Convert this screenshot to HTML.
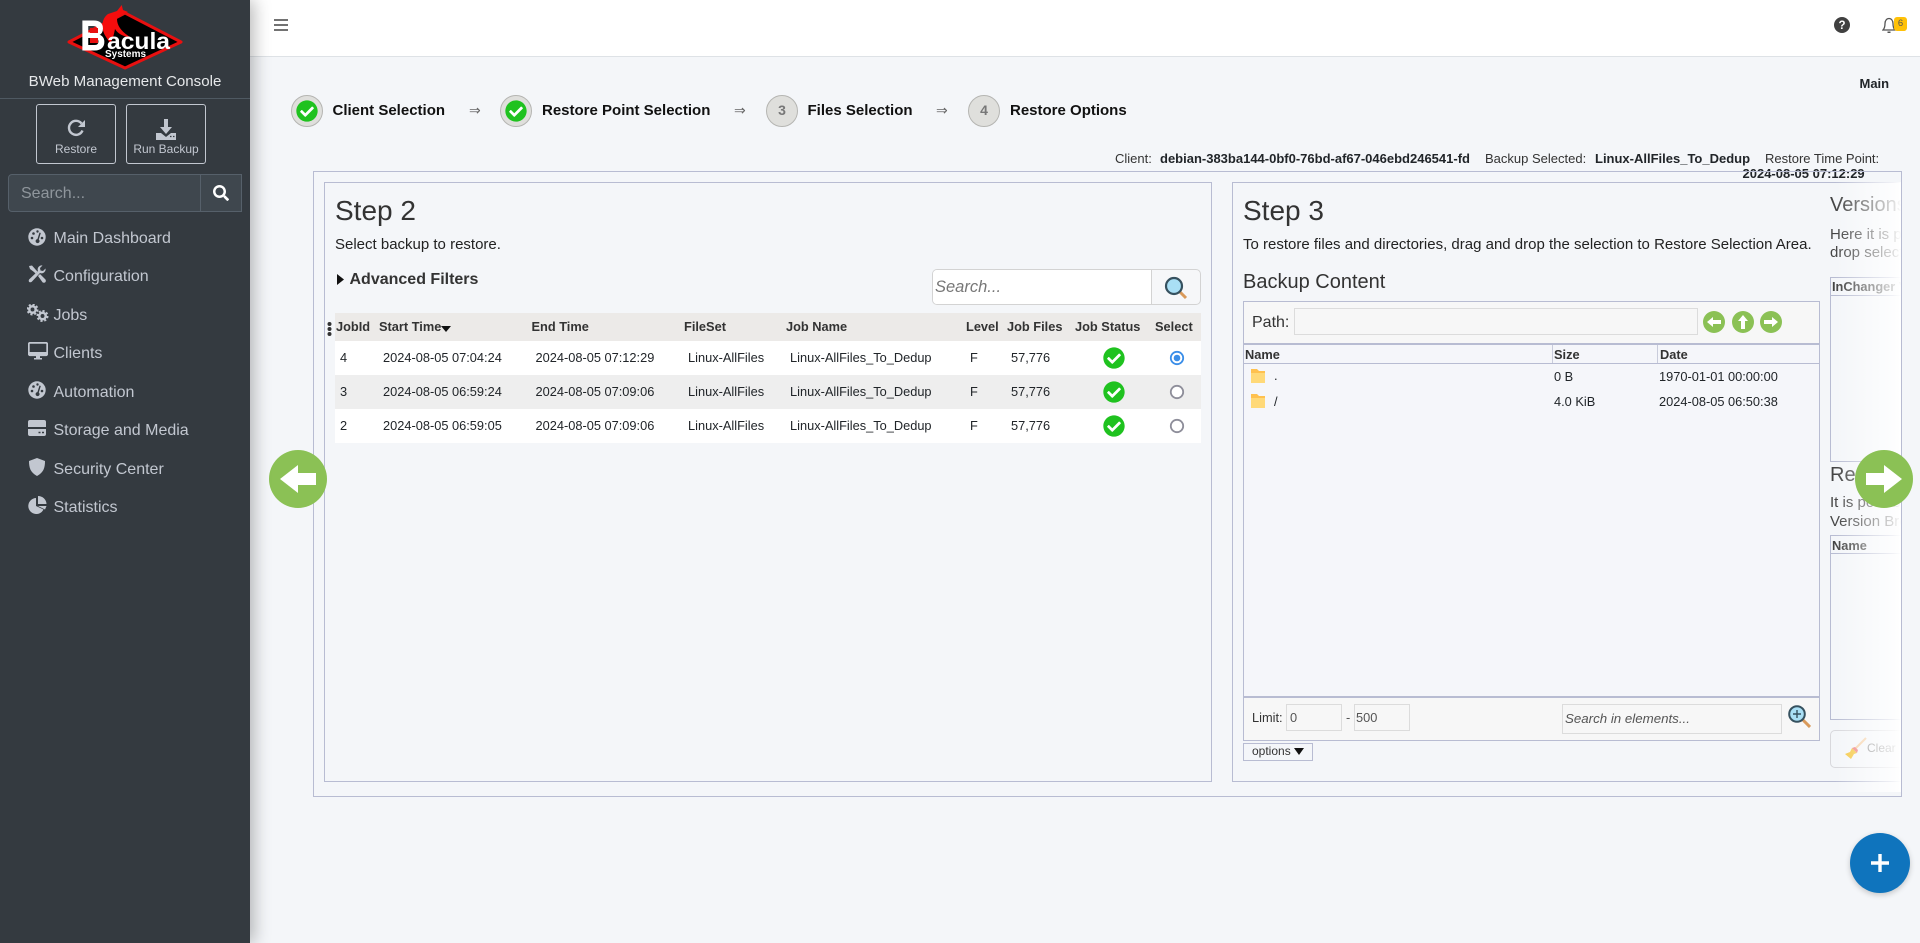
<!DOCTYPE html>
<html><head><meta charset="utf-8"><title>BWeb</title>
<style>
html,body{margin:0;padding:0;width:1920px;height:943px;overflow:hidden;background:#f4f6f9;font-family:"Liberation Sans",sans-serif;color:#212529}
.a,.t{position:absolute;box-sizing:border-box}
.t{white-space:nowrap;line-height:1}
.s{font-size:12.8px}
.i{font-size:13px}
.b{font-weight:bold}
.m{font-size:16px;color:#c2c7d0;left:53.5px}
.st{font-size:15px;font-weight:bold;color:#111}
.circ{width:32px;height:32px;border-radius:50%;background:#dfdfdc;border:1px solid #b5b5b2;top:95px;color:#777;font-weight:bold;font-size:14px;text-align:center;line-height:28px}
.arr{font-size:14px;color:#666;top:103px}
.bx{border:1px solid #b8bcd2}
svg{position:absolute;display:block}
</style></head><body>

<!-- topbar -->
<div class="a" style="left:250px;top:0;width:1670px;height:57px;background:#fff;border-bottom:1px solid #dee2e6"></div>
<svg style="left:274px;top:18px" width="14" height="14" viewBox="0 0 14 14"><path d="M0 2h14M0 7h14M0 12h14" stroke="#444" stroke-width="1.6"/></svg>
<svg style="left:1834px;top:17px" width="16" height="16" viewBox="0 0 16 16"><circle cx="8" cy="8" r="8" fill="#404040"/><text x="8" y="12" font-size="11.5" font-weight="bold" fill="#fff" text-anchor="middle" font-family="Liberation Sans">?</text></svg>
<svg style="left:1882px;top:16px" width="14" height="18" viewBox="0 0 14 18"><path d="M1 14c1.500-1.500 2-3 2-6.500C3 4.500 4.800 2.500 7 2.500s4 2 4 5c0 3.500.5 5 2 6.500z" fill="none" stroke="#555" stroke-width="1.300"/><path d="M5.500 15.500h3v1.500h-3z" fill="#555"/></svg>
<div class="a" style="left:1894px;top:17px;width:13px;height:14px;background:#ffc107;border-radius:3px;font-size:9.500px;line-height:14px;text-align:center;color:#555">6</div>
<div class="t b i" style="left:1859.500px;top:77px">Main</div>

<!-- sidebar -->
<div class="a" style="left:0;top:0;width:250px;height:943px;background:#343a40;box-shadow:4px 0 16px rgba(0,0,0,.28);z-index:5">
  <svg style="left:66px;top:4px" width="118" height="68" viewBox="0 0 118 68">
    <path d="M59 9L115 38 59 64 3 38z" fill="#000" stroke="#e81010" stroke-width="3" stroke-linejoin="round"/>
    <path d="M36.700 24C36 17 38 13 42 10L51 7 55.700 1 57 6 62 8C56 10 52 12 51 15 51 22 56 28 64 33 58 33 52 30 49 25 48 30 47 35 44 39 41 34 37 30 36.700 24z" fill="#f50d0d"/>
    <text x="14.500" y="46" font-family="Liberation Sans" font-weight="bold" font-size="42" fill="#fff" stroke="#fff" stroke-width="1" textLength="25" lengthAdjust="spacingAndGlyphs">B</text>
    <path d="M24 24h8v5h-8zM24 34h8v5h-8z" fill="#e81010"/>
    <text x="41" y="45" font-family="Liberation Sans" font-weight="bold" font-size="23" fill="#fff" textLength="63" lengthAdjust="spacingAndGlyphs">acula</text>
    <text x="39" y="53" font-family="Liberation Sans" font-weight="bold" font-size="10" fill="#fff" textLength="41" lengthAdjust="spacingAndGlyphs">Systems</text>
  </svg>
  <div class="t" style="left:0;width:250px;text-align:center;top:74px;font-size:15.100px;color:#e6e8ea">BWeb Management Console</div>
  <div class="a" style="left:0;top:98px;width:250px;height:1px;background:#4f5962"></div>

  <div class="a" style="left:36px;top:104px;width:80px;height:60px;border:1px solid #c2c7d0;border-radius:3px"></div>
  <svg style="left:67px;top:119px" width="19" height="19" viewBox="0 0 19 19"><path d="M15.500 11.500A7 7 0 1 1 14.500 4.500" fill="none" stroke="#c2c7d0" stroke-width="2.400"/><path d="M18 1v7h-7z" fill="#c2c7d0"/></svg>
  <div class="t" style="left:36px;width:80px;text-align:center;top:143px;font-size:12px;color:#c2c7d0">Restore</div>
  <div class="a" style="left:126px;top:104px;width:80px;height:60px;border:1px solid #c2c7d0;border-radius:3px"></div>
  <svg style="left:156px;top:119px" width="20" height="21" viewBox="0 0 20 21"><path d="M8 0h4v8h4l-6 7-6-7h4z" fill="#c2c7d0"/><path d="M0 14h5l5 4 5-4h5v7H0z" fill="#c2c7d0"/><path d="M14 17.500h1.500M17 17.500h1.500" stroke="#343a40" stroke-width="1.200"/></svg>
  <div class="t" style="left:126px;width:80px;text-align:center;top:143px;font-size:12px;color:#c2c7d0">Run Backup</div>

  <div class="a" style="left:8px;top:174px;width:234px;height:38px;background:#3f474e;border:1px solid #56606a;border-radius:4px 0 0 4px"></div>
  <div class="a" style="left:200px;top:174px;width:1px;height:38px;background:#56606a"></div>
  <div class="t" style="left:21px;top:186px;font-size:16px;color:#8f969c">Search...</div>
  <svg style="left:213px;top:185px" width="16" height="16" viewBox="0 0 512 512"><path fill="#fff" d="M505 442.700L405.300 343c-4.500-4.500-10.600-7-17-7H372c27.600-35.300 44-79.700 44-128C416 93.100 322.900 0 208 0S0 93.100 0 208s93.100 208 208 208c48.300 0 92.700-16.400 128-44v16.300c0 6.400 2.500 12.500 7 17l99.700 99.700c9.400 9.400 24.600 9.400 33.900 0l28.300-28.300c9.400-9.400 9.400-24.600.1-34zM208 336c-70.700 0-128-57.200-128-128 0-70.700 57.200-128 128-128 70.700 0 128 57.200 128 128 0 70.700-57.200 128-128 128z"/></svg>

  <svg style="left:28px;top:228px" width="18" height="18" viewBox="0 0 18 18"><circle cx="9" cy="9" r="8.700" fill="#c2c7d0"/><g fill="#343a40"><circle cx="4" cy="10" r="1.300"/><circle cx="5.500" cy="5.500" r="1.300"/><circle cx="9.500" cy="3.500" r="1.200"/><circle cx="14" cy="10" r="1.300"/><path d="M11.500 4.500l1.300.5-2 6.500a2 2 0 1 1-1.400-.4z"/></g></svg>
  <div class="t m" style="top:231px">Main Dashboard</div>
  <svg style="left:28px;top:265px" width="18" height="18" viewBox="0 0 18 18"><path d="M1 1l3-0.500 4 4.500 1.500 1.500-2 2L6 7 2 4zM10 11l2-2 5.500 5.500c.5 1 .5 2-.2 2.700s-1.800.7-2.700.2z" fill="#c2c7d0"/><path d="M17.500 3.500a4 4 0 0 1-5.500 4.500L4 16.500c-1 1-2.500 1-3 .2s-.3-2 .7-2.800L10 6a4 4 0 0 1 4.500-5.500L12 3l.5 2.500L15 6z" fill="#c2c7d0"/></svg>
  <div class="t m" style="top:269px">Configuration</div>
  <svg style="left:27px;top:304px" width="22" height="18" viewBox="0 0 22 18"><circle cx="5.500" cy="5.500" r="3.200" fill="none" stroke="#c2c7d0" stroke-width="2.500"/><circle cx="5.500" cy="5.500" r="5" fill="none" stroke="#c2c7d0" stroke-width="2" stroke-dasharray="2.100 1.800"/><circle cx="15.500" cy="12" r="3.200" fill="none" stroke="#c2c7d0" stroke-width="2.500"/><circle cx="15.500" cy="12" r="5" fill="none" stroke="#c2c7d0" stroke-width="2" stroke-dasharray="2.100 1.800"/></svg>
  <div class="t m" style="top:308px">Jobs</div>
  <svg style="left:27.500px;top:342px" width="20" height="18" viewBox="0 0 20 18"><rect x=".8" y=".8" width="18.400" height="12.400" rx="1.200" fill="none" stroke="#c2c7d0" stroke-width="1.800"/><rect x="1" y="10" width="18" height="4" fill="#c2c7d0"/><path d="M8 14h4v2h2v1.500H6V16h2z" fill="#c2c7d0"/></svg>
  <div class="t m" style="top:346px">Clients</div>
  <svg style="left:28px;top:381px" width="18" height="18" viewBox="0 0 18 18"><circle cx="9" cy="9" r="8.700" fill="#c2c7d0"/><g fill="#343a40"><circle cx="4" cy="10" r="1.300"/><circle cx="5.500" cy="5.500" r="1.300"/><circle cx="9.500" cy="3.500" r="1.200"/><circle cx="14" cy="10" r="1.300"/><path d="M11.500 4.500l1.300.5-2 6.500a2 2 0 1 1-1.400-.4z"/></g></svg>
  <div class="t m" style="top:385px">Automation</div>
  <svg style="left:28px;top:420px" width="18" height="16" viewBox="0 0 18 16"><path d="M2 0h14a2 2 0 0 1 2 2v5H0V2a2 2 0 0 1 2-2zM0 9h18v5a2 2 0 0 1-2 2H2a2 2 0 0 1-2-2z" fill="#c2c7d0"/><path d="M10.500 12.500h2M14 12.500h2" stroke="#343a40" stroke-width="1.500"/></svg>
  <div class="t m" style="top:423px">Storage and Media</div>
  <svg style="left:29px;top:458px" width="16" height="18" viewBox="0 0 16 18"><path d="M8 0l8 3c0 7-1.500 11.500-8 15C1.500 14.500 0 10 0 3z" fill="#c2c7d0"/></svg>
  <div class="t m" style="top:462px">Security Center</div>
  <svg style="left:28px;top:496px" width="19" height="18" viewBox="0 0 19 18"><path d="M8 2a8 8 0 1 0 7.500 11.500L8 10z" fill="#c2c7d0"/><path d="M10 0v8h8.500A8.500 8.500 0 0 0 10 0z" fill="#c2c7d0"/><path d="M10 10l8.500 0-1.500 3.500z" fill="#c2c7d0"/></svg>
  <div class="t m" style="top:500px">Statistics</div>
</div>

<!-- wizard steps -->
<div class="a circ" style="left:291px"></div>
<svg style="left:296px;top:100px" width="22" height="22" viewBox="0 0 512 512"><circle cx="256" cy="256" r="200" fill="#fff"/><path fill="#1fc21f" d="M504 256c0 136.967-111.033 248-248 248S8 392.967 8 256 119.033 8 256 8s248 111.033 248 248zM227.314 387.314l184-184c6.248-6.248 6.248-16.379 0-22.627l-22.627-22.627c-6.248-6.249-16.379-6.249-22.628 0L216 308.118l-70.059-70.059c-6.248-6.248-16.379-6.248-22.628 0l-22.627 22.627c-6.248 6.248-6.248 16.379 0 22.627l104 104c6.249 6.249 16.379 6.249 22.628.001z"/></svg>
<div class="t st" style="left:332.500px;top:103px">Client Selection</div>
<div class="t arr" style="left:469px">⇒</div>
<div class="a circ" style="left:500px"></div>
<svg style="left:505px;top:100px" width="22" height="22" viewBox="0 0 512 512"><circle cx="256" cy="256" r="200" fill="#fff"/><path fill="#1fc21f" d="M504 256c0 136.967-111.033 248-248 248S8 392.967 8 256 119.033 8 256 8s248 111.033 248 248zM227.314 387.314l184-184c6.248-6.248 6.248-16.379 0-22.627l-22.627-22.627c-6.248-6.249-16.379-6.249-22.628 0L216 308.118l-70.059-70.059c-6.248-6.248-16.379-6.248-22.628 0l-22.627 22.627c-6.248 6.248-6.248 16.379 0 22.627l104 104c6.249 6.249 16.379 6.249 22.628.001z"/></svg>
<div class="t st" style="left:542px;top:103px">Restore Point Selection</div>
<div class="t arr" style="left:734px">⇒</div>
<div class="a circ" style="left:766px">3</div>
<div class="t st" style="left:807.500px;top:103px">Files Selection</div>
<div class="t arr" style="left:936px">⇒</div>
<div class="a circ" style="left:968px">4</div>
<div class="t st" style="left:1010px;top:103px">Restore Options</div>

<!-- info -->
<div class="t i" style="left:1115px;top:152px;color:#333">Client:</div>
<div class="t i b" style="left:1160px;top:152px">debian-383ba144-0bf0-76bd-af67-046ebd246541-fd</div>
<div class="t i" style="left:1485px;top:152px;color:#333">Backup Selected:</div>
<div class="t i b" style="left:1595px;top:152px">Linux-AllFiles_To_Dedup</div>
<div class="t i" style="left:1765px;top:152px;color:#333">Restore Time Point:</div>
<div class="t i b" style="left:1742.500px;top:167px">2024-08-05 07:12:29</div>

<!-- frames -->
<div class="a bx" style="left:313px;top:171px;width:1589px;height:626px"></div>
<div class="a bx" style="left:324px;top:182px;width:888px;height:600px"></div>
<div class="a" style="left:1232px;top:182px;width:669px;height:600px;border:1px solid #b8bcd2;border-right:0"></div>

<!-- step 2 -->
<div class="t" style="left:335px;top:197px;font-size:28px;color:#333">Step 2</div>
<div class="t" style="left:335px;top:237px;font-size:15px;color:#222">Select backup to restore.</div>
<svg style="left:337px;top:274px" width="8" height="11" viewBox="0 0 8 11"><path d="M0 0l7 5.500L0 11z" fill="#111"/></svg>
<div class="t b" style="left:349.500px;top:272px;font-size:16px;color:#333">Advanced Filters</div>
<div class="a" style="left:932px;top:269px;width:269px;height:36px;border:1px solid #d3d3d3;border-radius:5px;background:#f6f7f9"></div>
<div class="a" style="left:933px;top:270px;width:219px;height:34px;background:#fff;border-right:1px solid #d3d3d3;border-radius:4px 0 0 4px"></div>
<div class="t" style="left:935px;top:279px;font-size:16.500px;font-style:italic;color:#777">Search...</div>
<svg style="left:1164px;top:276px" width="24" height="24" viewBox="0 0 24 24"><path d="M15 15l7 7" stroke="#d99a5b" stroke-width="3"/><circle cx="10" cy="10" r="8" fill="#a9dff5" stroke="#36515f" stroke-width="2.200"/></svg>

<div class="a" style="left:335px;top:313px;width:866px;height:28px;background:#eceae8"></div>
<div class="a" style="left:335px;top:341px;width:866px;height:34px;background:#fff"></div>
<div class="a" style="left:335px;top:375px;width:866px;height:34px;background:#eee"></div>
<div class="a" style="left:335px;top:409px;width:866px;height:34px;background:#fff"></div>
<svg style="left:327px;top:321px" width="5" height="16" viewBox="0 0 5 16"><circle cx="2.500" cy="3" r="2" fill="#333"/><circle cx="2.500" cy="8" r="2" fill="#333"/><circle cx="2.500" cy="13" r="2" fill="#333"/></svg>
<div class="t s b" style="left:336px;top:321px;color:#333">JobId</div>
<div class="t s b" style="left:379px;top:321px;color:#333">Start Time</div>
<svg style="left:441px;top:326px" width="10" height="6" viewBox="0 0 10 6"><path d="M0 0h10L5 6z" fill="#111"/></svg>
<div class="t s b" style="left:531.500px;top:321px;color:#333">End Time</div>
<div class="t s b" style="left:684px;top:321px;color:#333">FileSet</div>
<div class="t s b" style="left:786px;top:321px;color:#333">Job Name</div>
<div class="t s b" style="left:966px;top:321px;color:#333">Level</div>
<div class="t s b" style="left:1007px;top:321px;color:#333">Job Files</div>
<div class="t s b" style="left:1075px;top:321px;color:#333">Job Status</div>
<div class="t s b" style="left:1155px;top:321px;color:#333">Select</div>

<div class="t s" style="left:340px;top:352px">4</div><div class="t s" style="left:383px;top:352px">2024-08-05 07:04:24</div><div class="t s" style="left:535.500px;top:352px">2024-08-05 07:12:29</div><div class="t s" style="left:688px;top:352px">Linux-AllFiles</div><div class="t s" style="left:790px;top:352px">Linux-AllFiles_To_Dedup</div><div class="t s" style="left:970px;top:352px">F</div><div class="t s" style="left:1011px;top:352px">57,776</div>
<div class="t s" style="left:340px;top:386px">3</div><div class="t s" style="left:383px;top:386px">2024-08-05 06:59:24</div><div class="t s" style="left:535.500px;top:386px">2024-08-05 07:09:06</div><div class="t s" style="left:688px;top:386px">Linux-AllFiles</div><div class="t s" style="left:790px;top:386px">Linux-AllFiles_To_Dedup</div><div class="t s" style="left:970px;top:386px">F</div><div class="t s" style="left:1011px;top:386px">57,776</div>
<div class="t s" style="left:340px;top:420px">2</div><div class="t s" style="left:383px;top:420px">2024-08-05 06:59:05</div><div class="t s" style="left:535.500px;top:420px">2024-08-05 07:09:06</div><div class="t s" style="left:688px;top:420px">Linux-AllFiles</div><div class="t s" style="left:790px;top:420px">Linux-AllFiles_To_Dedup</div><div class="t s" style="left:970px;top:420px">F</div><div class="t s" style="left:1011px;top:420px">57,776</div>

<svg style="left:1103px;top:347px" width="22" height="22" viewBox="0 0 512 512"><circle cx="256" cy="256" r="200" fill="#fff"/><path fill="#1fc21f" d="M504 256c0 136.967-111.033 248-248 248S8 392.967 8 256 119.033 8 256 8s248 111.033 248 248zM227.314 387.314l184-184c6.248-6.248 6.248-16.379 0-22.627l-22.627-22.627c-6.248-6.249-16.379-6.249-22.628 0L216 308.118l-70.059-70.059c-6.248-6.248-16.379-6.248-22.628 0l-22.627 22.627c-6.248 6.248-6.248 16.379 0 22.627l104 104c6.249 6.249 16.379 6.249 22.628.001z"/></svg>
<svg style="left:1103px;top:381px" width="22" height="22" viewBox="0 0 512 512"><circle cx="256" cy="256" r="200" fill="#fff"/><path fill="#1fc21f" d="M504 256c0 136.967-111.033 248-248 248S8 392.967 8 256 119.033 8 256 8s248 111.033 248 248zM227.314 387.314l184-184c6.248-6.248 6.248-16.379 0-22.627l-22.627-22.627c-6.248-6.249-16.379-6.249-22.628 0L216 308.118l-70.059-70.059c-6.248-6.248-16.379-6.248-22.628 0l-22.627 22.627c-6.248 6.248-6.248 16.379 0 22.627l104 104c6.249 6.249 16.379 6.249 22.628.001z"/></svg>
<svg style="left:1103px;top:415px" width="22" height="22" viewBox="0 0 512 512"><circle cx="256" cy="256" r="200" fill="#fff"/><path fill="#1fc21f" d="M504 256c0 136.967-111.033 248-248 248S8 392.967 8 256 119.033 8 256 8s248 111.033 248 248zM227.314 387.314l184-184c6.248-6.248 6.248-16.379 0-22.627l-22.627-22.627c-6.248-6.249-16.379-6.249-22.628 0L216 308.118l-70.059-70.059c-6.248-6.248-16.379-6.248-22.628 0l-22.627 22.627c-6.248 6.248-6.248 16.379 0 22.627l104 104c6.249 6.249 16.379 6.249 22.628.001z"/></svg>
<svg style="left:1169px;top:350px" width="16" height="16" viewBox="0 0 16 16"><circle cx="8" cy="8" r="6.200" fill="#fff" stroke="#3b8ee8" stroke-width="1.800"/><circle cx="8" cy="8" r="3.300" fill="#3b8ee8"/></svg>
<svg style="left:1169px;top:384px" width="16" height="16" viewBox="0 0 16 16"><circle cx="8" cy="8" r="6.200" fill="#fff" stroke="#8e8e9a" stroke-width="1.800"/></svg>
<svg style="left:1169px;top:418px" width="16" height="16" viewBox="0 0 16 16"><circle cx="8" cy="8" r="6.200" fill="#fff" stroke="#8e8e9a" stroke-width="1.800"/></svg>

<!-- step 3 -->
<div class="t" style="left:1243px;top:197px;font-size:28px;color:#333">Step 3</div>
<div class="t" style="left:1243px;top:237px;font-size:15px;color:#222">To restore files and directories, drag and drop the selection to Restore Selection Area.</div>
<div class="t" style="left:1243px;top:272px;font-size:20px;color:#333">Backup Content</div>
<div class="a bx" style="left:1243px;top:301px;width:577px;height:440px;background:#f5f6fa"></div>
<div class="a" style="left:1244px;top:302px;width:575px;height:43px;background:#f7f7f7;border-bottom:2px solid #b8bcd2"></div>
<div class="t" style="left:1252px;top:315px;font-size:16px;color:#333">Path:</div>
<div class="a" style="left:1294px;top:308px;width:404px;height:27px;background:#f7f7f7;border:1px solid #dcdcdc"></div>
<svg style="left:1703px;top:311px" width="22" height="22" viewBox="0 0 22 22"><circle cx="11" cy="11" r="11" fill="#8bc155"/><path d="M4 11l6-5v3h8v4h-8v3z" fill="#fff"/></svg>
<svg style="left:1732px;top:311px" width="22" height="22" viewBox="0 0 22 22"><circle cx="11" cy="11" r="11" fill="#8bc155"/><path d="M11 4l5 6h-3v8H9v-8H6z" fill="#fff"/></svg>
<svg style="left:1760px;top:311px" width="22" height="22" viewBox="0 0 22 22"><circle cx="11" cy="11" r="11" fill="#8bc155"/><path d="M18 11l-6-5v3H4v4h8v3z" fill="#fff"/></svg>
<div class="a" style="left:1244px;top:363px;width:575px;height:1px;background:#b8bcd2"></div>
<div class="a" style="left:1552px;top:345px;width:1px;height:18px;background:#c9ccdb"></div>
<div class="a" style="left:1657px;top:345px;width:1px;height:18px;background:#c9ccdb"></div>
<div class="t s b" style="left:1245px;top:349px;color:#333">Name</div>
<div class="t s b" style="left:1554px;top:349px;color:#333">Size</div>
<div class="t s b" style="left:1660px;top:349px;color:#333">Date</div>
<svg style="left:1250px;top:369px" width="16" height="14" viewBox="0 0 16 14"><path d="M1 0h6l2 2h6v12H1z" fill="#ffc14f"/><path d="M1 4h14v10H1z" fill="#ffd978"/></svg>
<svg style="left:1250px;top:394px" width="16" height="14" viewBox="0 0 16 14"><path d="M1 0h6l2 2h6v12H1z" fill="#ffc14f"/><path d="M1 4h14v10H1z" fill="#ffd978"/></svg>
<div class="t s" style="left:1274px;top:370px">.</div>
<div class="t s" style="left:1274px;top:396px">/</div>
<div class="t s" style="left:1554px;top:371px">0 B</div>
<div class="t s" style="left:1554px;top:396px">4.0 KiB</div>
<div class="t s" style="left:1659px;top:371px">1970-01-01 00:00:00</div>
<div class="t s" style="left:1659px;top:396px">2024-08-05 06:50:38</div>
<div class="a" style="left:1244px;top:696px;width:575px;height:44px;background:#f7f7f7;border-top:2px solid #b8bcd2"></div>
<div class="t s" style="left:1252px;top:712px;color:#333">Limit:</div>
<div class="a" style="left:1286px;top:704px;width:56px;height:27px;border:1px solid #dcdcdc"></div>
<div class="t s" style="left:1290px;top:712px;color:#555">0</div>
<div class="t s" style="left:1346px;top:712px;color:#555">-</div>
<div class="a" style="left:1354px;top:704px;width:56px;height:27px;border:1px solid #dcdcdc"></div>
<div class="t s" style="left:1356px;top:712px;color:#555">500</div>
<div class="a" style="left:1562px;top:704px;width:220px;height:30px;border:1px solid #dcdcdc"></div>
<div class="t s" style="left:1565px;top:712px;font-style:italic;font-size:13.300px;color:#555">Search in elements...</div>
<svg style="left:1788px;top:705px" width="23" height="23" viewBox="0 0 23 23"><path d="M14 14l8 8" stroke="#d99a5b" stroke-width="3"/><circle cx="9" cy="9" r="7.800" fill="#a9dff5" stroke="#36515f" stroke-width="2"/><path d="M9 5v8M5 9h8" stroke="#36515f" stroke-width="1.400"/></svg>
<div class="a bx" style="left:1243px;top:743px;width:70px;height:18px"></div>
<div class="t" style="left:1252px;top:745px;font-size:12px;color:#333">options</div>
<svg style="left:1294px;top:748px" width="10" height="7" viewBox="0 0 10 7"><path d="M0 0h10L5 7z" fill="#111"/></svg>

<!-- version column -->
<div class="t" style="left:1830px;top:195px;font-size:20px;color:#444">Versions</div>
<div class="t" style="left:1830px;top:227px;font-size:15px;color:#444">Here it is possible</div>
<div class="t" style="left:1830px;top:245px;font-size:15px;color:#444">drop selection</div>
<div class="a bx" style="left:1830px;top:277px;width:80px;height:185px"></div>
<div class="a" style="left:1831px;top:295px;width:78px;height:1px;background:#b8bcd2"></div>
<div class="t s b" style="left:1832px;top:281px;color:#444">InChanger Volume</div>
<div class="t" style="left:1830px;top:465px;font-size:20px;color:#444">Restore</div>
<div class="t" style="left:1830px;top:495px;font-size:15px;color:#444">It is possible</div>
<div class="t" style="left:1830px;top:514px;font-size:15px;color:#444">Version Browser</div>
<div class="a bx" style="left:1830px;top:535px;width:80px;height:185px"></div>
<div class="a" style="left:1831px;top:553px;width:78px;height:1px;background:#b8bcd2"></div>
<div class="t s b" style="left:1832px;top:540px;color:#444">Name</div>
<div class="a" style="left:1830px;top:730px;width:80px;height:38px;border:1px solid #d8d8dc;border-radius:5px"></div>
<svg style="left:1843px;top:737px" width="24" height="24" viewBox="0 0 24 24"><path d="M23 1L11 13" stroke="#f5cfa4" stroke-width="2"/><path d="M9 11l5 5-3 1-3 5-6-5 5-2z" fill="#f5c842"/><path d="M9 11l3-1 3 3-1 3z" fill="#f08080"/></svg>
<div class="t" style="left:1867px;top:742px;font-size:12px;color:#888">Clear</div>

<!-- fade -->
<div class="a" style="left:1835px;top:182px;width:66px;height:610px;background:linear-gradient(to right,rgba(255,255,255,0),rgba(255,255,255,.45) 50%,rgba(255,255,255,.8) 88%,#fff 100%)"></div>
<div class="a" style="left:1901px;top:172px;width:19px;height:625px;background:#f4f6f9;border-left:1px solid #b8bcd2"></div>

<!-- nav arrows -->
<svg style="left:269px;top:450px;z-index:3" width="58" height="58" viewBox="0 0 58 58"><circle cx="29" cy="29" r="29" fill="#8bc155"/><path d="M11 29L29 15v8h18v12H29v8z" fill="#fff"/></svg>
<svg style="left:1855px;top:450px;z-index:3" width="58" height="58" viewBox="0 0 58 58"><circle cx="29" cy="29" r="29" fill="#8bc155"/><path d="M47 29L29 15v8H11v12h18v8z" fill="#fff"/></svg>

<!-- fab -->
<div class="a" style="left:1850px;top:833px;width:60px;height:60px;border-radius:50%;background:#0f74bd;box-shadow:0 2px 6px rgba(0,0,0,.2)"></div>
<svg style="left:1870px;top:853px" width="20" height="20" viewBox="0 0 20 20"><path d="M10 1v18M1 10h18" stroke="#fff" stroke-width="3.400"/></svg>
</body></html>
